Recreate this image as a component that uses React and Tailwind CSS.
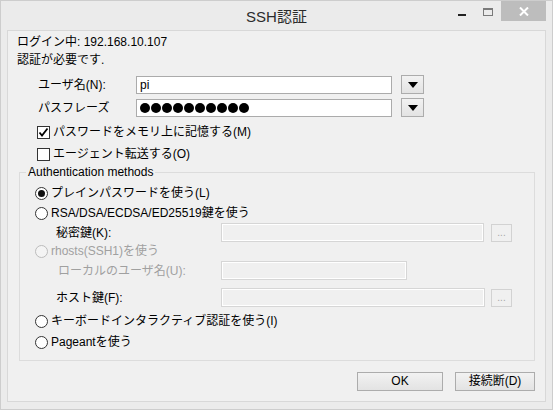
import React from 'react';

const FONT = { fontFamily: '"Liberation Sans", "Noto Sans CJK JP", sans-serif' };

const Checkbox = ({ checked }) => (
  <span className="w-[13px] h-[13px] border border-[#333333] bg-white flex items-center justify-center shrink-0">
    {checked && (
      <svg width="11" height="11" viewBox="0 0 11 11">
        <path d="M1.5 5.5 L4 8.5 L9.5 1.5" stroke="#000" strokeWidth="1.8" fill="none" />
      </svg>
    )}
  </span>
);

const Radio = ({ checked, disabled }) => (
  <span
    className={
      'w-[13px] h-[13px] rounded-full border flex items-center justify-center shrink-0 ' +
      (disabled ? 'border-[#bcbcbc] bg-[#f4f4f4]' : 'border-[#333333] bg-white')
    }
  >
    {checked && <span className="w-[7px] h-[7px] rounded-full bg-[#111111]" />}
  </span>
);

const DropButton = () => (
  <button className="w-[23px] h-[19px] border border-[#acacac] bg-gradient-to-b from-[#f2f2f2] to-[#e3e3e3] flex items-center justify-center">
    <svg width="10" height="6" viewBox="0 0 10 6">
      <path d="M0 0 H10 L5 6 Z" fill="#000" />
    </svg>
  </button>
);

const DisabledInput = ({ width }) => (
  <div className={'h-[19px] border border-[#d6d6d6] bg-[#f0f0f0] shadow-[inset_0_0_0_1px_#ffffff] ' + width} />
);

const DotsButton = () => (
  <div className="w-[21px] h-[18px] border border-[#d2d2d2] bg-[#f0f0f0] flex items-end justify-center text-[10px] leading-[12px] text-[#a6a6a6] pb-[2px]">
    ...
  </div>
);

export default function App() {
  return (
    <div
      className="w-[553px] h-[410px] bg-[#ebebeb] border border-[#cdcdcd] flex flex-col text-[12px] text-black"
      style={FONT}
    >
      {/* title bar */}
      <div className="h-[29px] flex items-start relative">
        <div className="flex-1 text-center text-[15px] leading-[15px] pt-[8px] text-[#2b2b2b]">SSH認証</div>
        <div className="absolute right-[6px] top-0 flex items-start">
          <div className="w-[26px] h-[20px] flex items-center justify-center">
            <span className="w-[8px] h-[2px] bg-[#222222] mt-[8px]" />
          </div>
          <div className="w-[26px] h-[20px] flex items-center justify-center">
            <span className="w-[10px] h-[8px] border border-[#7a7a7a] border-t-2 mt-[2px]" />
          </div>
          <div className="w-[45px] h-[20px] bg-[#bdbdbd] flex items-center justify-center">
            <svg width="10" height="9" viewBox="0 0 10 9">
              <path d="M1 0.5 L9 8.5 M9 0.5 L1 8.5" stroke="#fff" strokeWidth="2" />
            </svg>
          </div>
        </div>
      </div>

      {/* client area */}
      <div className="flex-1 mx-[6px] mb-[7px] border border-[#d8d8d8] bg-[#f0f0f0] flex flex-col">
        <div className="h-[18px] mt-[2px] pl-[9px] flex items-center">ログイン中: 192.168.10.107</div>
        <div className="h-[18px] pl-[9px] flex items-center">認証が必要です.</div>

        <div className="mt-[6px] pl-[30px] flex items-center h-[19px]">
          <span className="w-[98px]">ユーザ名(N):</span>
          <div className="w-[256px] h-[18px] border border-[#ababab] bg-white flex items-center pl-[3px]">pi</div>
          <span className="ml-[9px]"><DropButton /></span>
        </div>
        <div className="mt-[4px] pl-[30px] flex items-center h-[19px]">
          <span className="w-[98px]">パスフレーズ</span>
          <div className="w-[256px] h-[18px] border border-[#ababab] bg-white flex items-center pl-[3px] gap-[1px]">
            {Array.from({ length: 10 }).map((_, i) => (
              <span key={i} className="w-[10px] h-[10px] rounded-full bg-black" />
            ))}
          </div>
          <span className="ml-[9px]"><DropButton /></span>
        </div>

        <div className="mt-[6px] h-[18px] pl-[29px] flex items-center gap-[3px]">
          <Checkbox checked />
          <span>パスワードをメモリ上に記憶する(M)</span>
        </div>
        <div className="mt-[4px] h-[18px] pl-[29px] flex items-center gap-[3px]">
          <Checkbox />
          <span>エージェント転送する(O)</span>
        </div>

        <fieldset className="mt-[2px] ml-[11px] mr-[10px] border border-[#dcdcdc] pb-[9px]">
          <legend className="ml-[6px] px-[2px] leading-[14px]">Authentication methods</legend>

          <div className="mt-[5px] h-[18px] pl-[15px] flex items-center gap-[3px]">
            <Radio checked />
            <span>プレインパスワードを使う(L)</span>
          </div>
          <div className="mt-[2px] h-[18px] pl-[15px] flex items-center gap-[3px]">
            <Radio />
            <span>RSA/DSA/ECDSA/ED25519鍵を使う</span>
          </div>
          <div className="mt-[1px] h-[19px] pl-[36px] flex items-center">
            <span className="w-[165px]">秘密鍵(K):</span>
            <DisabledInput width="w-[263px]" />
            <span className="ml-[7px]"><DotsButton /></span>
          </div>
          <div className="mt-[0px] h-[18px] pl-[15px] flex items-center gap-[3px] text-[#a0a0a0]">
            <Radio disabled />
            <span>rhosts(SSH1)を使う</span>
          </div>
          <div className="mt-[1px] h-[19px] pl-[38px] flex items-center text-[#a0a0a0]">
            <span className="w-[163px]">ローカルのユーザ名(U):</span>
            <DisabledInput width="w-[186px]" />
          </div>
          <div className="mt-[8px] h-[19px] pl-[36px] flex items-center">
            <span className="w-[165px]">ホスト鍵(F):</span>
            <DisabledInput width="w-[264px]" />
            <span className="ml-[6px]"><DotsButton /></span>
          </div>
          <div className="mt-[5px] h-[18px] pl-[15px] flex items-center gap-[3px]">
            <Radio />
            <span>キーボードインタラクティブ認証を使う(I)</span>
          </div>
          <div className="mt-[3px] h-[18px] pl-[15px] flex items-center gap-[3px]">
            <Radio />
            <span>Pageantを使う</span>
          </div>
        </fieldset>

        <div className="mt-[11px] pr-[10px] flex justify-end gap-[12px]">
          <button className="w-[86px] h-[19px] border border-[#acacac] bg-gradient-to-b from-[#f2f2f2] to-[#e3e3e3] leading-[17px]">OK</button>
          <button className="w-[80px] h-[19px] border border-[#acacac] bg-gradient-to-b from-[#f2f2f2] to-[#e3e3e3] leading-[17px]">接続断(D)</button>
        </div>
      </div>
    </div>
  );
}
